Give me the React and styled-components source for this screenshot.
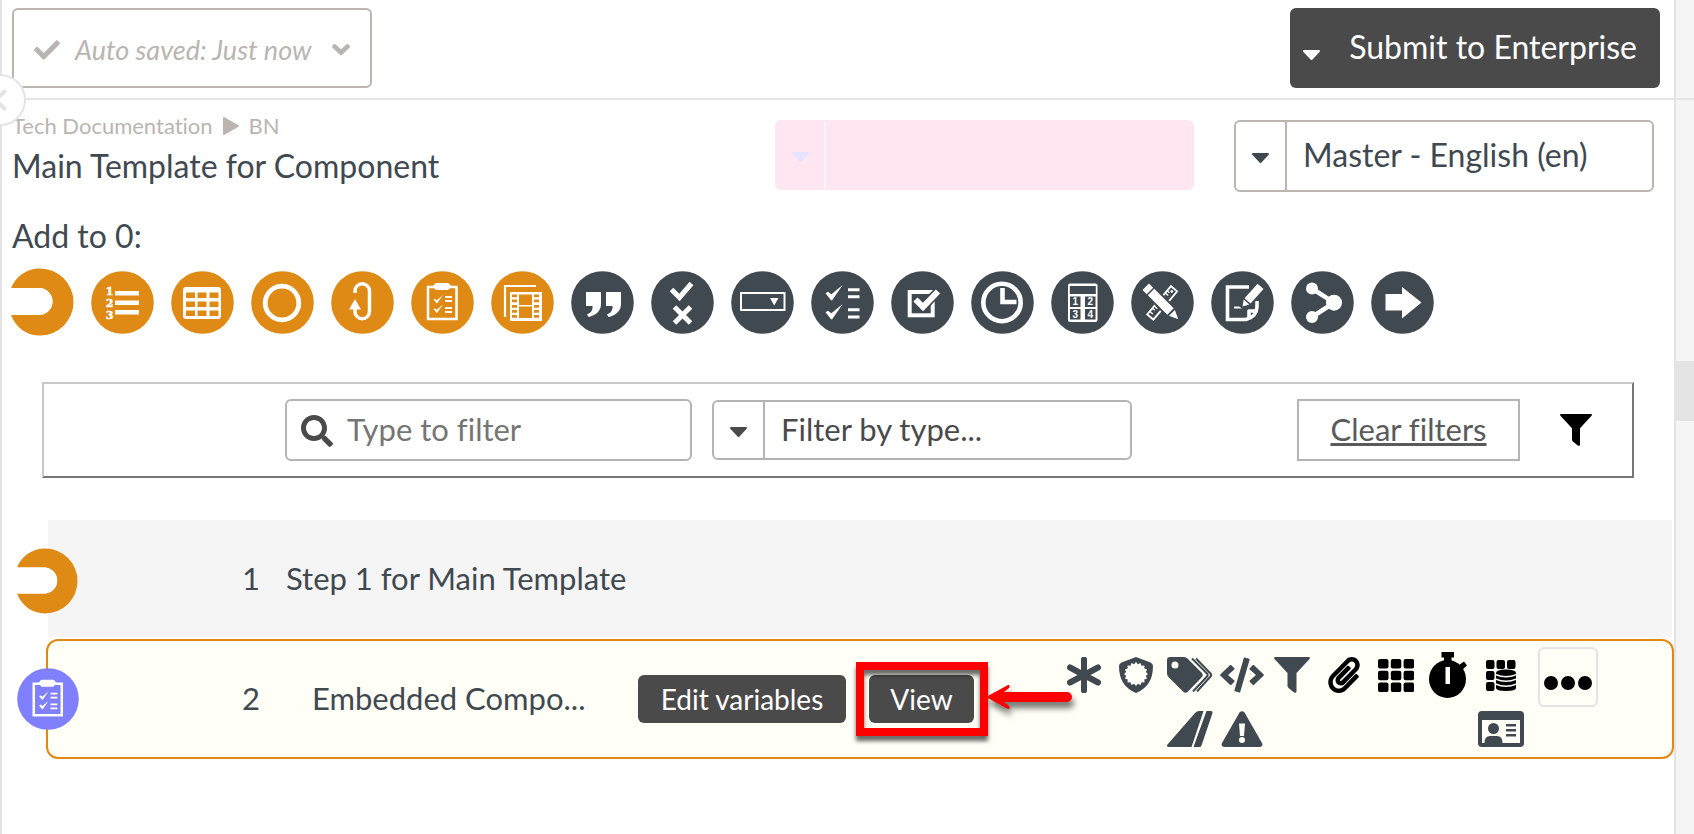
import React from 'react';
import styled, { createGlobalStyle, css } from 'styled-components';
import { FaCheck, FaSearch, FaPaperclip, FaCode } from 'react-icons/fa';

const orange = '#de8a14';
const slate = '#404850';
const charcoal = '#4a4a4a';
const stone = '#bab5b1';
const line = '#e4e4e4';
const purple = '#8080ff';

const GlobalStyle = createGlobalStyle`
  *, *::before, *::after { box-sizing: border-box; }
  body { margin: 0; background: #fff; color: ${slate}; }
  body, button, input, select {
    font-family: Lato, "Open Sans", sans-serif;
    font-size: 31px;
    line-height: 40px;
    font-variant-ligatures: none;
  }
  button { cursor: pointer; }
  svg { display: block; flex: none; }
`;

const Page = styled.div`
  display: flex;
  min-height: 100vh;
`;

const Main = styled.main`
  flex: 1;
  min-width: 0;
  border-left: 2px solid ${line};
`;

const Header = styled.header`
  position: relative;
  display: flex;
  justify-content: space-between;
  height: 100px;
  padding: 8px 14px 10px 10px;
  border-bottom: 2px solid ${line};
`;

const SavedButton = styled.button`
  display: flex;
  align-items: center;
  width: 360px;
  padding: 4px 20px 0;
  border: 2px solid ${stone};
  border-radius: 6px;
  background: none;
  color: ${stone};
  font-size: 27px;
  font-style: italic;
  white-space: nowrap;
  span { flex: 1; text-align: left; padding-left: 15px; }
`;

const SubmitButton = styled.button`
  display: flex;
  align-items: center;
  justify-content: space-between;
  width: 370px;
  padding: 0 23px 2px 12px;
  border: 0;
  border-radius: 6px;
  background: ${charcoal};
  color: #fff;
  font-size: 32px;
  white-space: nowrap;
  svg { margin-top: 16px; }
`;

const CollapseButton = styled.button`
  position: absolute;
  left: -28px;
  bottom: -28px;
  display: flex;
  align-items: center;
  justify-content: flex-end;
  width: 52px;
  height: 52px;
  padding: 0 17px 0 0;
  border: 2px solid ${line};
  border-radius: 50%;
  background: #fff;
  color: ${line};
`;

const Intro = styled.section`
  display: flex;
  align-items: flex-start;
  gap: 40px;
  padding: 12px 20px 0 10px;
`;

const Heading = styled.div`
  flex: 1;
  white-space: nowrap;
`;

const Breadcrumb = styled.nav`
  display: flex;
  align-items: center;
  gap: 10px;
  color: ${stone};
  font-size: 22px;
  line-height: 28px;
  a { color: inherit; text-decoration: none; }
`;

const Title = styled.h1`
  margin: 6px 0 0;
  font-size: 32px;
  font-weight: 400;
`;

const Picker = styled.div`
  display: flex;
  width: ${p => p.$width || 420}px;
  height: ${p => p.$height}px;
  margin-top: ${p => p.$top || 0}px;
  border: 2px solid ${p => p.$edge};
  border-radius: 6px;
  background: ${p => p.$fill || '#fff'};
  color: ${p => p.$color || slate};
`;

const PickerCaret = styled.span`
  display: flex;
  align-items: center;
  justify-content: center;
  width: ${p => p.$width || 51}px;
  padding-top: 4px;
  border-right: 2px solid ${p => p.$edge};
`;

const PickerSelect = styled.select`
  flex: 1;
  min-width: 0;
  padding: 0 16px 2px;
  border: 0;
  appearance: none;
  background: none;
  color: inherit;
  font-size: ${p => p.$size || 31}px;
`;

const PaletteLabel = styled.h2`
  margin: 24px 0 12px 10px;
  font-size: 32px;
  font-weight: 400;
`;

const Palette = styled.div`
  display: flex;
  align-items: center;
  gap: 17px;
  margin-left: 9px;
`;

const PaletteButton = styled.button`
  flex: none;
  padding: 0;
  border: 0;
  background: none;
`;

const FilterBar = styled.section`
  display: flex;
  align-items: center;
  margin: 46px 40px 42px;
  height: 96px;
  padding: 0 40px 0 241px;
  border: 2px solid;
  border-color: #c8c8c8 #767676 #767676 #c8c8c8;
`;

const SearchField = styled.label`
  display: flex;
  align-items: center;
  gap: 14px;
  width: 407px;
  height: 62px;
  margin-right: 20px;
  padding: 2px 14px 0;
  border: 2px solid #b4b4b4;
  border-radius: 6px;
  color: ${charcoal};
`;

const SearchInput = styled.input`
  flex: 1;
  min-width: 0;
  padding: 0 0 4px;
  border: 0;
  outline: 0;
  background: none;
  &::placeholder { color: #757575; opacity: 1; }
`;

const ClearButton = styled.button`
  width: 223px;
  height: 62px;
  margin: 0 40px 0 auto;
  padding: 0 0 2px;
  border: 2px solid #b4b4b4;
  background: #fff;
  color: #5a5a5a;
  text-decoration: underline;
  white-space: nowrap;
`;

const IconButton = styled.button`
  padding: 0;
  border: 0;
  background: none;
  color: #000;
`;

const Steps = styled.ol`
  display: flex;
  flex-direction: column;
  gap: 2px;
  margin: 0;
  padding: 0 0 0 44px;
  list-style: none;
`;

const Step = styled.li`
  position: relative;
  display: flex;
  align-items: center;
  height: 117px;
  margin: 0 2px;
  background: #f5f5f5;
  ${p => p.$selected && css`
    height: 120px;
    margin: 0;
    border: 2px solid ${orange};
    border-radius: 12px;
    background: #fffff7;
  `}
`;

const StepBadge = styled.span`
  position: absolute;
  left: -31px;
  top: 50%;
  margin-top: -31px;
`;

const StepNumber = styled.span`
  width: 212px;
  padding-bottom: 2px;
  text-align: right;
`;

const StepName = styled.span`
  width: ${p => (p.$nested ? 378 : 400)}px;
  padding: 0 0 2px ${p => (p.$nested ? 52 : 26)}px;
  white-space: nowrap;
`;

const StepActions = styled.div`
  display: flex;
  gap: 23px;
`;

const ActionButton = styled.button`
  width: ${p => p.$width}px;
  height: 48px;
  padding: 0;
  border: 0;
  border-radius: 6px;
  background: ${charcoal};
  color: #fff;
  font-size: 28px;
  white-space: nowrap;
`;

const Highlighted = styled.div`
  position: relative;
`;

const HighlightBox = styled.span`
  position: absolute;
  inset: -13px -14px -13px -13px;
  border: 8px solid #f00;
  filter: drop-shadow(0 5px 2px rgba(0, 0, 0, 0.6));
  pointer-events: none;
`;

const HighlightArrow = styled.svg`
  position: absolute;
  left: 117px;
  top: 5px;
  overflow: visible;
  filter: drop-shadow(2px 6px 3px rgba(0, 0, 0, 0.55));
  pointer-events: none;
`;

const Markers = styled.div`
  display: grid;
  grid-template-columns: 52px 52px 56px 48px repeat(4, 52px) 54px;
  grid-template-rows: 54px 54px;
  place-items: center;
  margin-left: auto;
  padding-top: 6px;
`;

const Marker = styled.button`
  display: flex;
  grid-column: ${p => p.$column};
  grid-row: ${p => p.$row || 1};
  padding: 0;
  border: 0;
  background: none;
  color: ${p => (p.$black ? '#000' : slate)};
`;

const MoreButton = styled.button`
  display: flex;
  align-items: center;
  justify-content: center;
  align-self: flex-start;
  width: 60px;
  height: 60px;
  margin: 6px 74px 0 10px;
  padding: 12px 0 0;
  border: 2px solid ${line};
  border-radius: 6px;
  background: none;
  color: #000;
`;

const Rail = styled.aside`
  width: 20px;
  border-left: 2px solid ${line};
  background: #f5f5f5;
`;

const RailTop = styled.div`
  height: 100px;
  border-bottom: 2px solid ${line};
`;

const RailThumb = styled.div`
  height: 60px;
  margin-top: 261px;
  background: ${line};
`;

const Caret = () => (
  <svg width="19" height="11" viewBox="0 0 19 11" aria-hidden="true">
    <path d="M2 1H17L9.500 9Z" fill="currentColor" stroke="currentColor" strokeWidth="2" strokeLinejoin="round" />
  </svg>
);

const ChevronDown = () => (
  <svg width="18" height="12" viewBox="0 0 18 12" aria-hidden="true">
    <path d="M2.500 2.500L9 8.500L15.500 2.500" fill="none" stroke="currentColor" strokeWidth="4.600" strokeLinecap="round" />
  </svg>
);

const ChevronLeft = () => (
  <svg width="14" height="22" viewBox="0 0 14 22" aria-hidden="true">
    <path d="M11.500 2.500L2.500 11L11.500 19.500" fill="none" stroke="currentColor" strokeWidth="4" strokeLinecap="round" />
  </svg>
);

const Funnel = ({ size }) => (
  <svg width={size} height={size} viewBox="0 0 36 36" aria-hidden="true">
    <path d="M1 0H35Q36.500 0.500 35.500 2L22.500 16V34.500Q22 36.500 20 35.500L14.500 31Q13.500 30 13.500 29V16L0.500 2Q-0.500 0.500 1 0Z" fill="currentColor" />
  </svg>
);

const StepGlyph = ({ width = 63, height = 68 }) => (
  <svg width={width} height={height} viewBox="0 0 63 68" aria-hidden="true">
    <path d="M0 20C5 8 16 .5 29 .5A33.500 33.500 0 0 1 29 67.500C16 67.500 5 60 0 47H28A13.500 13.500 0 0 0 28 20Z" fill={orange} />
    <path d="M0 20H28A13.500 13.500 0 0 1 28 47H0Z" fill="#fff" />
  </svg>
);

const Disc = ({ fill, size = 63, children }) => (
  <svg width={size} height={size} viewBox="0 0 63 63" aria-hidden="true">
    <circle cx="31.500" cy="31.500" r="31.300" fill={fill} />
    {children}
  </svg>
);

const Tick = ({ x, y, s }) => (
  <path transform={`translate(${x} ${y}) scale(${s})`} d="M0 8.500L2.500 6.800L6 9.500L17.500 0L6.800 15.500L5.600 15.500Z" fill="#fff" />
);

const Clipboard = () => (
  <g>
    <rect x="17" y="16" width="28.500" height="32" fill="none" stroke="#fff" strokeWidth="2.500" />
    <path d="M22 14.500Q23 14.500 24 12.500Q24.500 12 25.500 12H36.500Q37.500 12 38 12.500Q39 14.500 40 14.500V16.500Q38.500 17 37 19H25Q23.500 17 22 16.500Z" fill="#fff" />
    <Tick x={22.500} y={24} s={0.54} />
    <Tick x={22.500} y={33.500} s={0.54} />
    <path d="M34 26H41M34 30H41M34 37H41M34 41H41" stroke="#fff" strokeWidth="1.800" />
  </g>
);

const digit = (size, family) => ({ fontFamily: family, fontSize: size, fontWeight: 700, fill: '#fff', textAnchor: 'middle' });

const glyphs = {
  numbered: (
    <g>
      <g {...digit(11, '"DejaVu Serif", serif')} stroke="#fff" strokeWidth="0.500">
        <text x="18.500" y="24">1</text>
        <text x="18.500" y="36">2</text>
        <text x="18.500" y="48">3</text>
      </g>
      <path d="M24 22.300H48M24 31.700H48M24 41.300H48" stroke="#fff" strokeWidth="4.600" />
    </g>
  ),
  table: (
    <g>
      <rect x="12" y="16" width="38" height="32" rx="3" fill="#fff" />
      {[21.500, 30.500, 39.500].map(y => [15, 26.500, 38.500].map(x => (
        <rect key={`${x}-${y}`} x={x} y={y} width="9" height="5.500" fill={orange} />
      )))}
    </g>
  ),
  ring: <circle cx="31" cy="32" r="16.800" fill="none" stroke="#fff" strokeWidth="4.800" />,
  loop: (
    <g>
      <path d="M24 22V20A7.200 7.200 0 0 1 38.500 20V40.500A7.200 7.200 0 0 1 24 40.500V37" fill="none" stroke="#fff" strokeWidth="3.500" />
      <path d="M24 28L30 38.500H18Z" fill="#fff" />
    </g>
  ),
  clipboard: <Clipboard />,
  media: (
    <g>
      <path d="M14 46V15H45" fill="none" stroke="#fff" strokeWidth="2.200" />
      <rect x="19" y="21" width="32" height="29" fill="#fff" />
      <rect x="28" y="23.500" width="13" height="10.500" fill={orange} />
      <rect x="28" y="35.500" width="13" height="11.500" fill={orange} />
      {[23.500, 28.500, 34, 39, 44].map(y => (
        <path key={y} d={`M21 ${y}h5v2.700h-5zM43 ${y}h5v2.700h-5z`} fill={orange} />
      ))}
    </g>
  ),
  quote: (
    <path d="M15 21H30V33C30 40 25 44.500 17.500 46L16 43.500C20 42 22 39 21.500 35H15ZM35 21H50V33C50 40 45 44.500 37.500 46L36 43.500C40 42 42 39 41.500 35H35Z" fill="#fff" />
  ),
  checkCross: (
    <path d="M20.500 18.500L28.500 26.500L40.500 12.500M23.500 36L39.500 52M39.500 36L23.500 52" fill="none" stroke="#fff" strokeWidth="5" />
  ),
  dropdown: (
    <g>
      <rect x="10" y="22" width="43.500" height="17" fill="none" stroke="#fff" strokeWidth="2" />
      <path d="M39 27H47.500L43.200 34.500Z" fill="#fff" />
    </g>
  ),
  checklist: (
    <g>
      <Tick x={14.500} y={14} s={0.98} />
      <Tick x={14.500} y={33} s={0.98} />
      <path d="M37 18.700H48.500M37 25.700H48.500M37 38.700H48.500M37 46H48.500" stroke="#fff" strokeWidth="3" />
    </g>
  ),
  checkbox: (
    <g>
      <rect x="18.700" y="21" width="23" height="23.300" fill="none" stroke="#fff" strokeWidth="4" />
      <path d="M24.500 28.500L32 36L47 20.500" fill="none" stroke={slate} strokeWidth="9" />
      <path d="M24.500 28.500L32 36L47 20.500" fill="none" stroke="#fff" strokeWidth="6" />
    </g>
  ),
  clock: (
    <g fill="none" stroke="#fff">
      <circle cx="31" cy="31.500" r="18.700" strokeWidth="4.600" />
      <path d="M31.500 17V31H45.500" strokeWidth="4.600" />
    </g>
  ),
  calculator: (
    <g>
      <rect x="17" y="12.500" width="29.500" height="38.500" rx="2" fill="#fff" />
      <rect x="18.800" y="15" width="26" height="8" fill={slate} />
      {[['1', 19, 25.500], ['2', 34, 25.500], ['3', 19, 38], ['4', 34, 38]].map(([n, x, y]) => (
        <g key={n}>
          <rect x={x} y={y} width="10.500" height="10.500" fill={slate} />
          <text x={x + 5.300} y={y + 8.600} {...digit(10, '"Liberation Sans", sans-serif')}>{n}</text>
        </g>
      ))}
    </g>
  ),
  design: (
    <g>
      <g transform="translate(31.500 31.500) rotate(-50)">
        <rect x="-19" y="-4" width="37" height="8" fill="none" stroke="#fff" strokeWidth="1.800" />
        <path d="M-15 -4V0M-11 -4V-1M-8 -4V0M9 -4V0M12 -4V-1" stroke="#fff" strokeWidth="1.300" />
        <circle cx="14.500" cy="0" r="1.400" fill="#fff" />
      </g>
      <g transform="translate(31 32) rotate(45)">
        <rect x="-24" y="-6.500" width="43" height="13" fill={slate} />
        <path d="M-23 -4.500H-17V4.500H-23ZM-15.500 -4.500H12V4.500H-15.500ZM14 -4.200L23 0L14 4.200Z" fill="#fff" />
      </g>
    </g>
  ),
  note: (
    <g>
      <path d="M38 16H16.500V48.500H35Q45.500 46 46 36V30M38 47V40H46" fill="none" stroke="#fff" strokeWidth="3.600" />
      <path d="M23 36.500H31.500" stroke="#fff" strokeWidth="2" />
      <g transform="translate(31.500 35.500) rotate(-48)">
        <rect x="-2" y="-6" width="31" height="12" fill={slate} />
        <path d="M0 0L6 -3.800V3.800ZM7.500 -4H27V4H7.500Z" fill="#fff" />
      </g>
    </g>
  ),
  share: (
    <g fill="#fff">
      <circle cx="21" cy="17.500" r="6" />
      <circle cx="21" cy="46" r="6" />
      <circle cx="43" cy="31.700" r="8" />
      <path d="M21 17.500L43 31.700L21 46" fill="none" stroke="#fff" strokeWidth="4.500" />
    </g>
  ),
  arrow: <path d="M14.500 23H31V16L50.500 31.500L31 47.500V39.500H14.500Z" fill="#fff" />,
};

const palette = [
  ['Numbered list', orange, 'numbered'],
  ['Table', orange, 'table'],
  ['Circle', orange, 'ring'],
  ['Loop', orange, 'loop'],
  ['Component', orange, 'clipboard'],
  ['Media', orange, 'media'],
  ['Text', slate, 'quote'],
  ['Pass or fail', slate, 'checkCross'],
  ['Drop-down', slate, 'dropdown'],
  ['Checklist', slate, 'checklist'],
  ['Checkbox', slate, 'checkbox'],
  ['Time', slate, 'clock'],
  ['Number', slate, 'calculator'],
  ['Design', slate, 'design'],
  ['Signature', slate, 'note'],
  ['Branch', slate, 'share'],
  ['Go to', slate, 'arrow'],
];

const gearPoints = Array.from({ length: 32 }, (_, i) => {
  const r = i % 2 ? 10 : 12;
  const a = (i * Math.PI) / 16;
  return `${17 + r * Math.sin(a)},${17 - r * Math.cos(a)}`;
}).join(' ');

const cells = (step, size, skip = []) =>
  Array.from({ length: 9 }, (_, i) => i)
    .filter(i => !skip.includes(i))
    .map(i => <rect key={i} x={(i % 3) * step[0]} y={Math.floor(i / 3) * step[1]} width={size[0]} height={size[1]} rx="2" />);

const markers = [
  ['Required', 1, 1, false, (
    <svg width="34" height="36" viewBox="0 0 34 36"><path d="M17 2.500V33.500M3 10.500L31 25.500M31 10.500L3 25.500" stroke="currentColor" strokeWidth="6" strokeLinecap="round" /></svg>
  )],
  ['Safety', 2, 1, false, (
    <svg width="34" height="36" viewBox="0 0 34 36">
      <path d="M17 0L31.500 5.500Q34 6.500 34 9C34 22 29 31 17 36C5 31 0 22 0 9Q0 6.500 2.500 5.500Z" fill="currentColor" />
      <polygon points={gearPoints} fill="#fffff7" />
    </svg>
  )],
  ['Tags', 3, 1, false, (
    <svg width="46" height="36" viewBox="0 0 46 36">
      <path fillRule="evenodd" d="M0 3Q0 0 3 0H17Q19 0 20.500 1.500L34.500 15.500Q37 18 34.500 20.500L21 34.500Q18.500 37 16 34.500L1.500 20Q0 18.500 0 16.500ZM8 4.500A3.500 3.500 0 1 0 8 11.500A3.500 3.500 0 1 0 8 4.500Z" fill="currentColor" />
      <path d="M25 1.500L40 16.500Q41.500 18 40 19.500L26 34.500M29 1.500L43.500 16.500Q45 18 43.500 19.500L30 34.500" fill="none" stroke="currentColor" strokeWidth="2" />
    </svg>
  )],
  ['Code', 4, 1, false, <FaCode size={44} />],
  ['Conditions', 5, 1, false, <Funnel size={36} />],
  ['Attachments', 6, 1, true, <FaPaperclip size={36} />],
  ['Grid', 7, 1, true, <svg width="36" height="33" viewBox="0 0 36 33" fill="currentColor">{cells([12.800, 11.800], [10.500, 9.500])}</svg>],
  ['Timer', 8, 1, true, (
    <svg width="38" height="46" viewBox="0 0 38 46">
      <path d="M12.500 0H25V5.500H12.500ZM15 5H22.500V12H15ZM30 13L35 9.500L38 13.500L33 18Z" fill="currentColor" />
      <ellipse cx="18.500" cy="27" rx="18.500" ry="19" fill="currentColor" />
      <rect x="16.500" y="15" width="4.500" height="17" fill="#fffff7" />
    </svg>
  )],
  ['Data', 9, 1, true, (
    <svg width="30" height="31" viewBox="0 0 30 31">
      <g fill="currentColor">{cells([10.500, 11], [8.500, 9], [4, 5, 7, 8])}</g>
      <path d="M10 13Q10 9.500 20 9.500Q30 9.500 30 13V28Q30 31 20 31Q10 31 10 28Z" fill="currentColor" />
      <path d="M9.500 14.500Q20 19 30.500 14.500M9.500 19Q20 23.500 30.500 19M9.500 24Q20 28.500 30.500 24" fill="none" stroke="#fffff7" strokeWidth="1.400" />
    </svg>
  )],
  ['Track', 3, 2, false, (
    <svg width="46" height="36" viewBox="0 0 46 36" fill="currentColor">
      <path d="M32 0H36.500L24.500 36H1.500Q-1 35.500 0.500 33.500L28 2Q30 0 32 0ZM39.500 0H44Q46 0.500 45.500 2L34.500 34.500Q34 36 32 36H26.500Z" />
    </svg>
  )],
  ['Warning', 4, 2, false, (
    <svg width="42" height="36" viewBox="0 0 42 36">
      <path d="M18.500 1.500Q21 -1 23.500 1.500L41 32Q42.500 35.500 39 36H3Q-.5 35.500 1 32Z" fill="currentColor" />
      <path d="M18 12.500H24L23 25H19Z" fill="#fffff7" />
      <circle cx="21" cy="29" r="3" fill="#fffff7" />
    </svg>
  )],
  ['Contact card', 9, 2, false, (
    <svg width="46" height="36" viewBox="0 0 46 36">
      <rect width="46" height="36" rx="4" fill="currentColor" />
      <rect x="4" y="9" width="38" height="23" fill="#fffff7" />
      <circle cx="15.500" cy="17.500" r="5.500" fill="currentColor" />
      <path d="M6.500 32Q6.500 25 12 25H19Q24.500 25 24.500 32ZM28 13H38V15.500H28ZM28 18H38V20.500H28ZM28 23H38V25.500H28Z" fill="currentColor" />
    </svg>
  )],
];

export default function App() {
  return (
    <>
      <GlobalStyle />
      <Page>
        <Main>
          <Header>
            <SavedButton type="button">
              <FaCheck size={26} />
              <span>Auto saved: Just now</span>
              <ChevronDown />
            </SavedButton>
            <SubmitButton type="button">
              <Caret />
              Submit to Enterprise
            </SubmitButton>
            <CollapseButton type="button" aria-label="Collapse panel">
              <ChevronLeft />
            </CollapseButton>
          </Header>

          <Intro>
            <Heading>
              <Breadcrumb aria-label="Breadcrumb">
                <a href="#tech-documentation">Tech Documentation</a>
                <svg width="16" height="18" viewBox="0 0 16 18" aria-hidden="true">
                  <path d="M1 1V17L15 9Z" fill="currentColor" stroke="currentColor" strokeWidth="2" strokeLinejoin="round" />
                </svg>
                <a href="#bn">BN</a>
              </Breadcrumb>
              <Title>Main Template for Component</Title>
            </Heading>
            <Picker $width={419} $height={70} $top={8} $edge="#ffe6f0" $fill="#ffe6f0" $color="#e4e4ff">
              <PickerCaret $width={49} $edge="#f5f5f5"><Caret /></PickerCaret>
              <PickerSelect aria-label="Variant" disabled />
            </Picker>
            <Picker $height={72} $top={8} $edge={stone}>
              <PickerCaret $edge={stone}><Caret /></PickerCaret>
              <PickerSelect aria-label="Language" $size={32}>
                <option>Master - English (en)</option>
              </PickerSelect>
            </Picker>
          </Intro>

          <PaletteLabel>Add to 0:</PaletteLabel>
          <Palette>
            <PaletteButton type="button" aria-label="Step"><StepGlyph /></PaletteButton>
            {palette.map(([label, fill, glyph]) => (
              <PaletteButton key={label} type="button" aria-label={label}>
                <Disc fill={fill}>{glyphs[glyph]}</Disc>
              </PaletteButton>
            ))}
          </Palette>

          <FilterBar aria-label="Filters">
            <SearchField>
              <FaSearch size={32} />
              <SearchInput type="text" placeholder="Type to filter" aria-label="Type to filter" />
            </SearchField>
            <Picker $height={60} $edge="#b4b4b4" $color={charcoal}>
              <PickerCaret $edge="#b4b4b4"><Caret /></PickerCaret>
              <PickerSelect aria-label="Filter by type">
                <option>Filter by type...</option>
              </PickerSelect>
            </Picker>
            <ClearButton type="button">Clear filters</ClearButton>
            <IconButton type="button" aria-label="Filter"><Funnel size={32} /></IconButton>
          </FilterBar>

          <Steps>
            <Step>
              <StepBadge><StepGlyph width={61} height={66} /></StepBadge>
              <StepNumber>1</StepNumber>
              <StepName>Step 1 for Main Template</StepName>
            </Step>
            <Step $selected>
              <StepBadge><Disc fill={purple} size={62}><Clipboard /></Disc></StepBadge>
              <StepNumber>2</StepNumber>
              <StepName $nested>Embedded Compo...</StepName>
              <StepActions>
                <ActionButton type="button" $width={208}>Edit variables</ActionButton>
                <Highlighted>
                  <ActionButton type="button" $width={105}>View</ActionButton>
                  <HighlightBox />
                  <HighlightArrow width="88" height="34" viewBox="0 0 88 34" aria-hidden="true">
                    <path d="M0 17L22 5Q25 5 23 8L18 12H81A5 5 0 0 1 81 22H18L23 26Q25 29 22 29Z" fill="#f00" />
                  </HighlightArrow>
                </Highlighted>
              </StepActions>
              <Markers>
                {markers.map(([label, column, row, black, icon]) => (
                  <Marker key={label} type="button" aria-label={label} $column={column} $row={row} $black={black}>
                    {icon}
                  </Marker>
                ))}
              </Markers>
              <MoreButton type="button" aria-label="More">
                <svg width="48" height="14" viewBox="0 0 48 14" fill="currentColor">
                  <circle cx="7" cy="7" r="7" />
                  <circle cx="24" cy="7" r="7" />
                  <circle cx="41" cy="7" r="7" />
                </svg>
              </MoreButton>
            </Step>
          </Steps>
        </Main>
        <Rail>
          <RailTop />
          <RailThumb />
        </Rail>
      </Page>
    </>
  );
}
